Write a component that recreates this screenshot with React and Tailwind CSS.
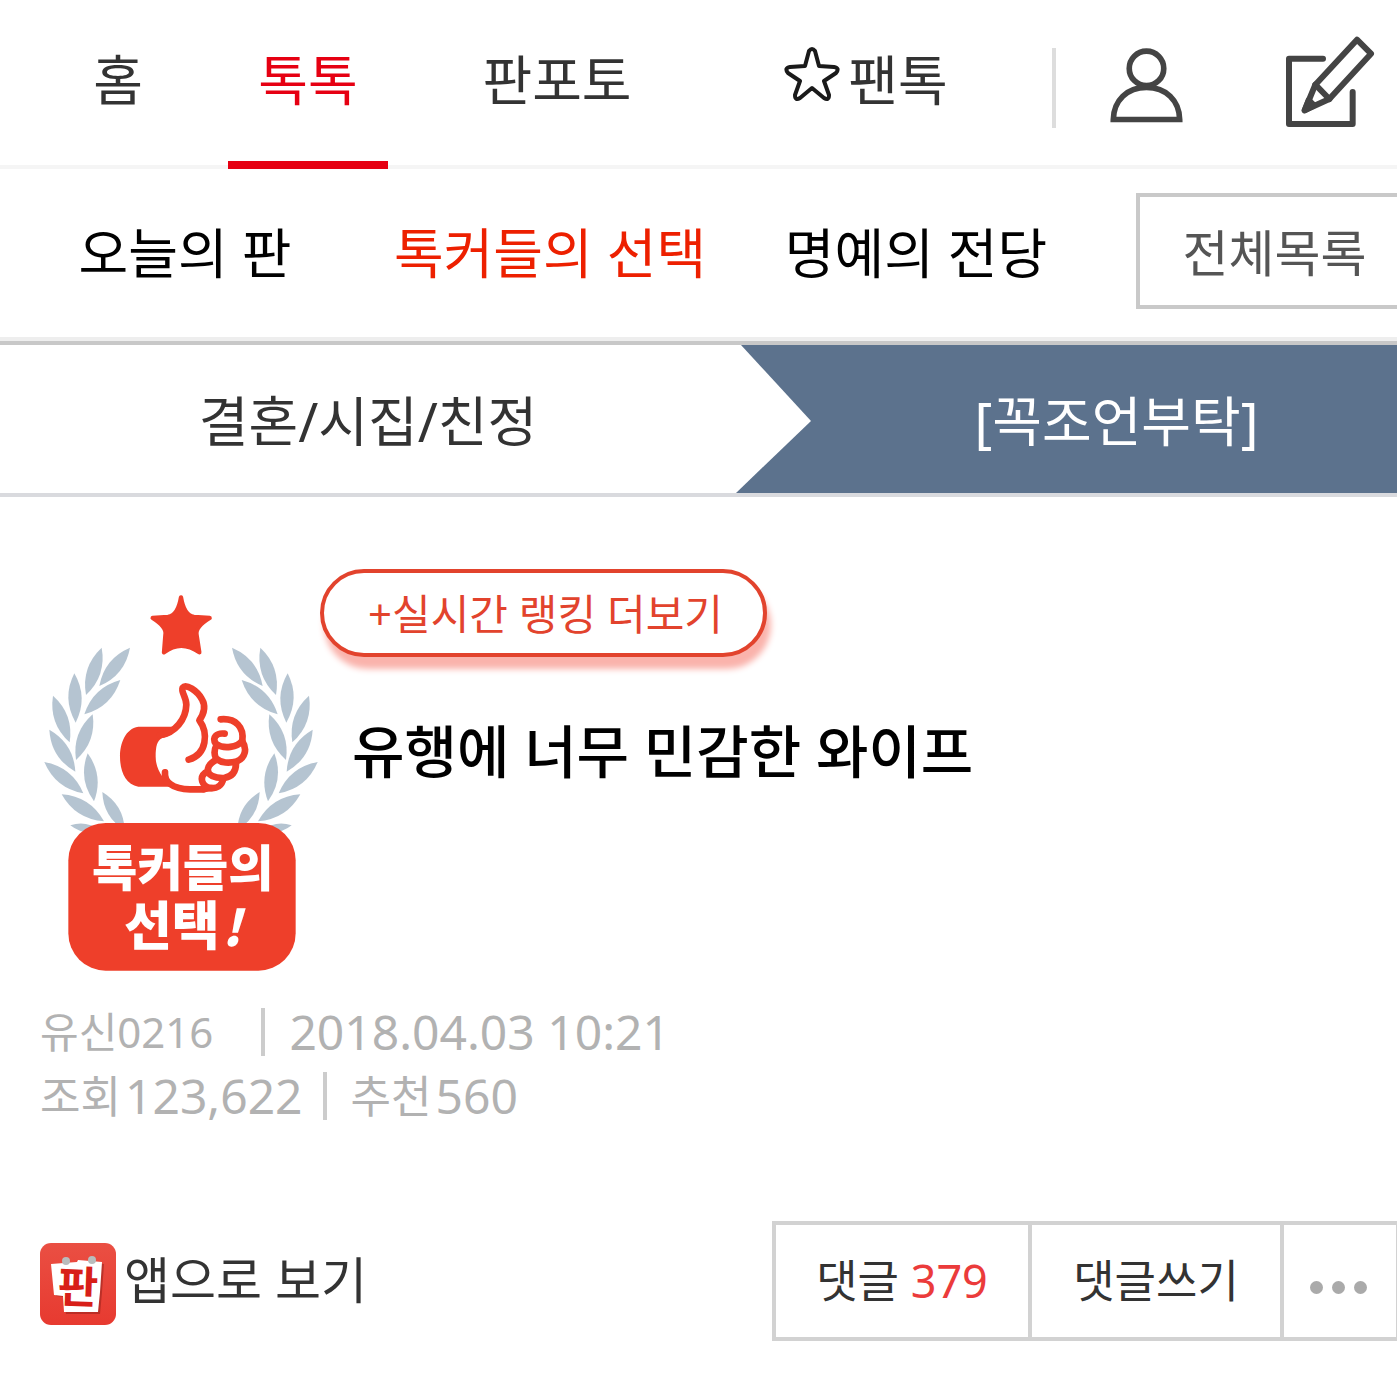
const LEAVES = [
  [215, 203, 168, 345],
  [300, 203, 208, 318],
  [133, 280, 137, 428],
  [271, 300, 163, 403],
  [69, 347, 119, 487],
  [188, 403, 138, 540],
  [58, 449, 136, 575],
  [173, 520, 192, 664],
  [43, 546, 160, 640],
  [95, 643, 222, 724],
  [217, 636, 284, 750],
  [121, 736, 210, 752],
];

function leafPath([x1, y1, x2, y2]) {
  const mx = (x1 + x2) / 2;
  const my = (y1 + y2) / 2;
  const nx = (y2 - y1) * 0.27;
  const ny = (x1 - x2) * 0.27;
  return `M${x1} ${y1}Q${mx + nx} ${my + ny} ${x2} ${y2}Q${mx - nx} ${my - ny} ${x1} ${y1}Z`;
}

function StarIcon() {
  return (
    <svg viewBox="0 0 56 55" className="w-14 h-[55px] shrink-0" fill="none" stroke="#1a1a1a" strokeWidth="4" strokeLinejoin="round" aria-hidden="true">
      <path d="M25 4Q28 0 31 4L35 19L50 20Q56 21 52 26L40 34L45 48Q45 54 40 51L28 41L16 51Q11 54 11 48L16 34L4 26Q0 21 6 20L21 19Z" />
    </svg>
  );
}

function UserIcon() {
  return (
    <svg viewBox="88 85 220 225" className="w-[73px] h-[75px]" fill="none" stroke="#444" strokeWidth="17" aria-hidden="true">
      <circle cx="198" cy="146" r="52" />
      <path d="M98 300C99 242 140 203 198 203C256 203 297 242 298 300Z" />
    </svg>
  );
}

function WriteIcon() {
  return (
    <svg viewBox="615 48 270 276" className="w-[90px] h-[92px]" fill="none" stroke="#444" strokeWidth="18" strokeLinecap="round" strokeLinejoin="round" aria-hidden="true">
      <path d="M729 116H627V312H818V216" />
      <path d="M831 59L873 101L748 237L674 271L706 194Z" />
      <path d="M706 194L748 237" />
      <path d="M686 240L674 271L702 256Z" fill="#444" />
    </svg>
  );
}

function Emblem() {
  return (
    <svg viewBox="30 30 840 1146" className="w-[280px] h-[382px] shrink-0" role="img" aria-label="톡커들의 선택!">
      <g fill="#b5c4d1">
        {LEAVES.map((leaf, i) => <path key={i} d={leafPath(leaf)} />)}
      </g>
      <g fill="#b5c4d1" transform="translate(906 0) scale(-1 1)">
        {LEAVES.map((leaf, i) => <path key={i} d={leafPath(leaf)} />)}
      </g>
      <path
        d="M453 52Q462 106 492 111L539 114Q494 142 500 166L508 217Q453 178 402 217L406 166Q412 142 368 114L414 111Q444 106 453 52Z"
        fill="#ee3f2a" stroke="#ee3f2a" strokeWidth="13" strokeLinejoin="round"
      />
      <path d="M440 440H325C286 446 270 490 270 530C270 572 286 614 325 620H425C404 602 377 572 377 530C377 500 381 482 396 474C416 470 436 458 440 440Z" fill="#ee3f2a" />
      <g fill="none" stroke="#ee3f2a" strokeWidth="20" strokeLinecap="round" strokeLinejoin="round">
        <path d="M390 466C436 458 468 418 469 374C469 352 452 335 458 323C468 310 502 332 516 358C529 380 521 402 508 421C535 458 532 522 476 539" />
        <path d="M405 577C402 604 426 628 480 628H522" />
        <path d="M572 418C618 414 642 442 637 482C622 502 582 508 558 492C544 472 560 458 584 461" />
        <path d="M637 484C652 506 646 534 620 544C600 550 572 550 558 535C550 520 554 506 560 494" />
        <path d="M618 546C619 572 608 590 582 594C556 595 530 586 534 566C537 552 546 546 558 540" />
        <path d="M580 596C576 617 560 627 541 624C514 618 508 592 526 578" />
        <path d="M522 627L545 624" />
      </g>
      <rect x="115" y="729" width="682" height="443" rx="112" fill="#ee3f2a" />
      <text fill="#fff" fontSize="148" className="font-['Noto_Sans_CJK_KR',sans-serif] font-black">
        <tspan x="186" y="918">톡커들의</tspan>
        <tspan x="282" y="1094" fontSize="156">선택</tspan>
        <tspan x="576" y="1098" fontStyle="italic">!</tspan>
      </text>
    </svg>
  );
}

function AppIcon() {
  return (
    <svg viewBox="0 0 76 82" className="w-[76px] h-[82px] shrink-0" aria-hidden="true">
      <defs>
        <linearGradient id="app-bg" x1="0" y1="0" x2="0" y2="1">
          <stop offset="0" stopColor="#ea4f43" />
          <stop offset="1" stopColor="#e73a30" />
        </linearGradient>
      </defs>
      <rect width="76" height="82" rx="11" fill="url(#app-bg)" />
      <path d="M13 23L38 20L39 18L64 21L62 49L60 71L26 71L24 54L16 53Z" fill="#8d1d17" opacity="0.5" />
      <path d="M11 21L37 19L38 17L62 19L60 49L58 69L24 69L23 53L14 52Z" fill="#fff" />
      <text x="38" y="60" fontSize="44" textAnchor="middle" fill="#d81f18" transform="rotate(2 37 44)" className="font-['Noto_Sans_CJK_KR',sans-serif] font-bold">판</text>
      <circle cx="26" cy="18" r="4" fill="#b9bcbc" />
      <circle cx="52" cy="17" r="4" fill="#b9bcbc" />
    </svg>
  );
}

function Separator() {
  return <span className="w-1 h-12 bg-[#ccc]" />;
}

export default function App() {
  return (
    <div className="min-h-screen overflow-hidden bg-white text-[#333] whitespace-nowrap font-['Noto_Sans','Noto_Sans_CJK_KR',sans-serif]">
      <header>
        <nav className="grid grid-cols-[220fr_160fr_338fr_280fr_46fr_4px_180fr_161fr] pl-2 h-[169px] border-b-4 border-[#f5f5f5] text-[54px] leading-[80px]">
          <a href="#home" className="flex justify-center pt-10">홈</a>
          <a href="#talk" className="flex justify-center pt-10 -mb-1 border-b-8 border-[#e60012] text-[#e60012]">톡톡</a>
          <a href="#photo" className="flex justify-center pt-10">판포토</a>
          <a href="#fan" className="flex justify-center items-start gap-2 pt-10">
            <span className="pt-[7px]"><StarIcon /></span>
            팬톡
          </a>
          <span />
          <span className="h-20 mt-12 bg-[#ddd]" />
          <button type="button" aria-label="내 정보" className="flex justify-center items-start pt-12"><UserIcon /></button>
          <button type="button" aria-label="글쓰기" className="flex justify-end items-start pt-9 pr-[22px]"><WriteIcon /></button>
        </nav>

        <nav className="grid grid-cols-[370fr_360fr_372fr_34fr_261fr] items-center h-[172px] pb-1 border-b-4 border-[#eee] text-[54px] leading-[80px] text-black">
          <a href="#today" className="pt-1 text-center">오늘의 판</a>
          <a href="#choice" className="pt-1 text-center text-[#ed2000]">톡커들의 선택</a>
          <a href="#fame" className="pt-1 text-center">명예의 전당</a>
          <span />
          <a href="#all" className="flex items-center justify-center h-[116px] pt-1 pl-3 border-4 border-r-0 border-[#c9c9c9] text-[50px] text-[#555]">전체목록</a>
        </nav>
      </header>

      <div className="grid grid-cols-[736fr_661fr] h-[156px] border-y-4 border-t-[#c8c8c8] border-b-[#d9dade] text-[54px]">
        <a href="#category" className="flex items-center justify-center pt-1">결혼/시집/친정</a>
        <a href="#advice" className="flex items-center bg-[#5c728d] text-white">
          <svg viewBox="0 0 76 148" className="w-[76px] h-[148px] shrink-0" aria-hidden="true">
            <path d="M0 0H5L75 76L0 148Z" fill="#fff" />
          </svg>
          <span className="flex-1 pt-1 pl-6 text-center">[꼭조언부탁]</span>
        </a>
      </div>

      <main className="pt-18">
        <section className="flex px-10">
          <div className="pt-[21px]"><Emblem /></div>
          <div className="min-w-0">
            <button type="button" className="flex items-center h-[88px] pl-11 pr-10 rounded-[44px] border-4 border-[#e2432d] bg-white text-[42px] text-[#e2432d] shadow-[4px_12px_6px_#fab3ac]">
              +실시간 랭킹 더보기
            </button>
            <h1 className="pt-[54px] pl-8 text-[57px] leading-[80px] font-medium text-black">유행에 너무 민감한 와이프</h1>
          </div>
        </section>

        <section className="px-10 pt-7 text-[48px] leading-16 text-[#b2b2b2]">
          <div className="flex items-center h-16">
            <span className="text-[42px]">유신0216</span>
            <span className="flex items-center gap-6 pl-12"><Separator />2018.04.03 10:21</span>
          </div>
          <div className="flex items-center h-16">
            <span className="pr-1 text-[44px]">조회</span>
            <span>123,622</span>
            <span className="flex items-center gap-6 pl-5 pr-1"><Separator /><span className="text-[44px]">추천</span></span>
            <span>560</span>
          </div>
        </section>

        <section className="flex items-center justify-between pt-[93px] pl-10 text-[45px]">
          <a href="#app" className="flex items-center gap-2 pt-[6px] text-[50px]">
            <AppIcon />
            <span className="pb-2">앱으로 보기</span>
          </a>
          <div className="flex h-[120px] border-4 border-r border-[#d2d2d2] divide-x-4 divide-[#d2d2d2]">
            <button type="button" className="w-[256px]">댓글 <span className="text-[#eb3b3b]">379</span></button>
            <button type="button" className="w-[252px]">댓글쓰기</button>
            <button type="button" aria-label="더보기" className="flex items-center justify-center gap-[9px] w-[112px] pt-3 pr-1">
              <span className="size-[13px] rounded-full bg-[#aaa]" />
              <span className="size-[13px] rounded-full bg-[#aaa]" />
              <span className="size-[13px] rounded-full bg-[#aaa]" />
            </button>
          </div>
        </section>
      </main>
    </div>
  );
}
